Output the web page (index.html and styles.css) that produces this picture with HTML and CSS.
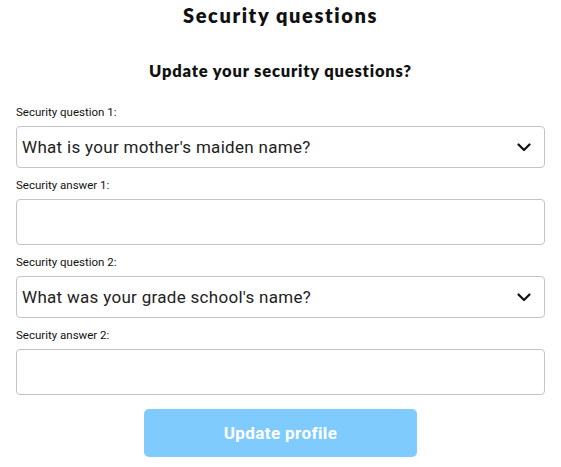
FILE: index.html
```html
<!DOCTYPE html>
<html>
<head>
<meta charset="utf-8">
<link rel="stylesheet" href="styles.css">
</head>
<body>
<div class="page">
  <h1 class="title">Security questions</h1>
  <h2 class="subtitle">Update your security questions?</h2>
  <form class="form">
    <div class="field">
      <label class="label">Security question 1:</label>
      <div class="select">
        <span class="select-text">What is your mother's maiden name?</span>
        <svg class="chevron" width="14" height="9" viewBox="0 0 14 9"><path d="M1.5 1.5 L7 7 L12.5 1.5" fill="none" stroke="#111" stroke-width="2.2" stroke-linecap="round" stroke-linejoin="round"/></svg>
      </div>
    </div>
    <div class="field">
      <label class="label">Security answer 1:</label>
      <div class="input"></div>
    </div>
    <div class="field">
      <label class="label">Security question 2:</label>
      <div class="select">
        <span class="select-text">What was your grade school's name?</span>
        <svg class="chevron" width="14" height="9" viewBox="0 0 14 9"><path d="M1.5 1.5 L7 7 L12.5 1.5" fill="none" stroke="#111" stroke-width="2.2" stroke-linecap="round" stroke-linejoin="round"/></svg>
      </div>
    </div>
    <div class="field">
      <label class="label">Security answer 2:</label>
      <div class="input"></div>
    </div>
    <div class="actions">
      <button type="button" class="button">Update profile</button>
    </div>
  </form>
</div>
</body>
</html>
```
FILE: styles.css
```css
* { box-sizing: border-box; }
html, body { margin: 0; padding: 0; background: #fff; }
body { font-family: Roboto, "Liberation Sans", sans-serif; color: #111; }
.page { padding: 0 16px 0 16px; width: 561px; }
.title {
  margin: 0;
  padding-top: 3px;
  height: 28px;
  font-family: Lato, "DejaVu Sans", sans-serif;
  font-weight: 800;
  font-size: 20px;
  line-height: 24px;
  letter-spacing: 1.6px;
  text-align: center;
  color: #111;
}
.subtitle {
  margin: 0;
  padding-top: 32px;
  height: 77px;
  font-family: Lato, "DejaVu Sans", sans-serif;
  font-weight: 800;
  font-size: 16.5px;
  line-height: 22px;
  letter-spacing: 0.8px;
  text-align: center;
  color: #111;
}
.form { display: flex; flex-direction: column; }
.field { display: flex; flex-direction: column; }
.label {
  display: block;
  font-size: 11.5px;
  line-height: 14px;
  margin-top: 10px;
  margin-bottom: 7px;
  color: #111;
}
.field:first-child .label { margin-top: 0; }
.select {
  height: 42px;
  border: 1px solid #c4c4c4;
  border-radius: 4px;
  display: flex;
  align-items: center;
  justify-content: space-between;
  padding: 0 13px 0 5px;
}
.select-text { font-size: 17px; letter-spacing: 0.3px; color: #222; }
.chevron { display: block; }
.input {
  height: 46px;
  border: 1px solid #c4c4c4;
  border-radius: 4px;
}
.actions { display: flex; justify-content: center; margin-top: 14px; }
.button {
  width: 273px;
  height: 48px;
  border: none;
  border-radius: 5px;
  background: #80cbfe;
  color: #fff;
  font-family: Roboto, "Liberation Sans", sans-serif;
  font-weight: 700;
  font-size: 17px;
  letter-spacing: 0.4px;
}
```
